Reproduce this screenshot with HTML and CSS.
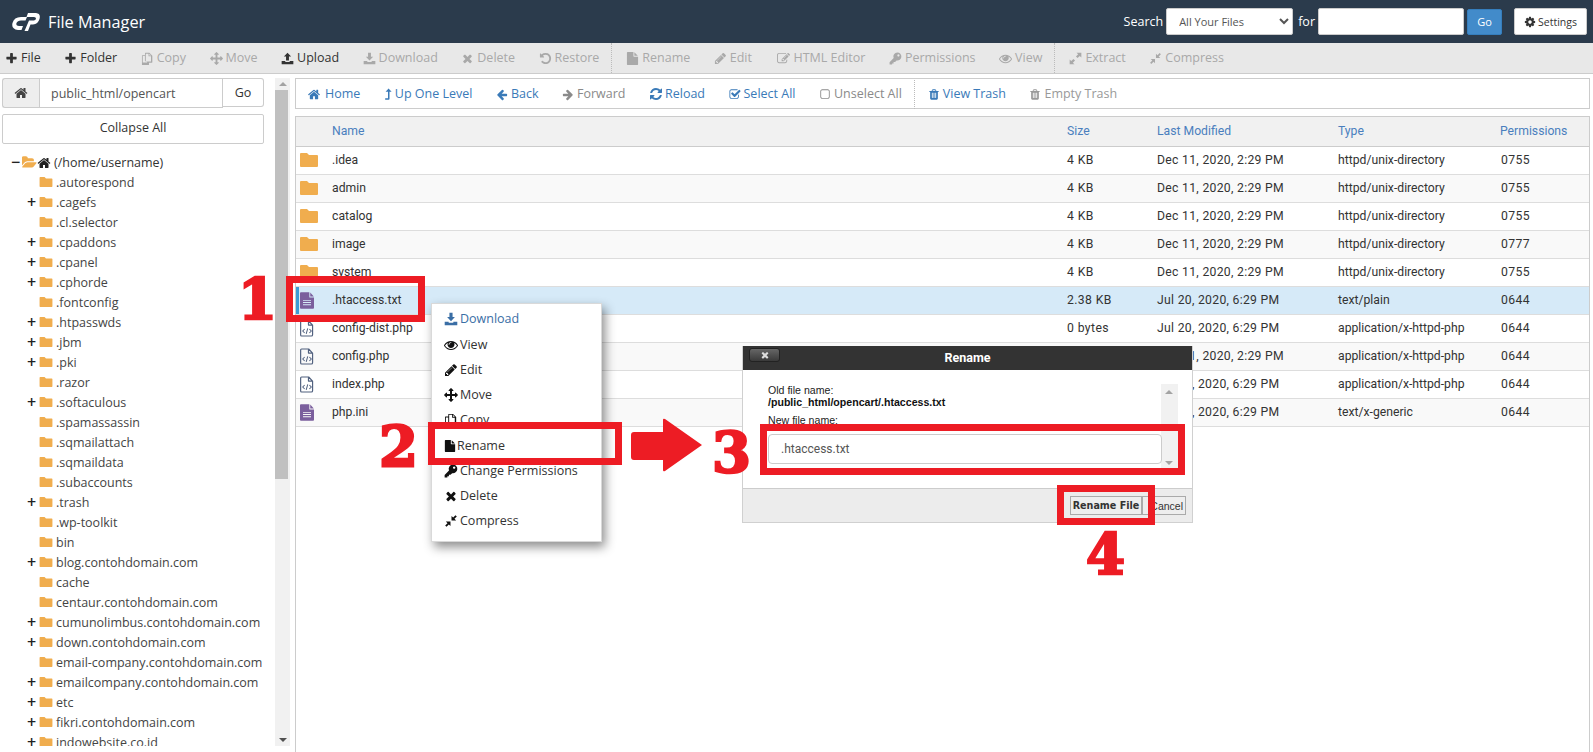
FILE: index.html
```html
<!DOCTYPE html>
<html lang="en">
<head>
<meta charset="utf-8">
<title>File Manager</title>
<link rel="stylesheet" href="styles.css">
</head>
<body>
<svg class="defs" viewBox="0 0 1792 1792" aria-hidden="true">
<symbol id="plus" viewBox="0 0 1792 1792"><path d="M1600 736v192q0 40-28 68t-68 28h-416v416q0 40-28 68t-68 28h-192q-40 0-68-28t-28-68v-416h-416q-40 0-68-28t-28-68v-192q0-40 28-68t68-28h416v-416q0-40 28-68t68-28h192q40 0 68 28t28 68v416h416q40 0 68 28t28 68z"/></symbol>
<symbol id="home" viewBox="0 0 1792 1792"><path d="M1472 992v480q0 26-19 45t-45 19h-384v-384h-256v384h-384q-26 0-45-19t-19-45v-480q0-1 .5-3t.5-3l575-474 575 474q1 2 1 6zm223-69l-62 74q-8 9-21 11h-3q-13 0-21-7l-692-577-692 577q-12 8-24 7-13-2-21-11l-62-74q-8-10-7-23.5t11-21.5l719-599q32-26 76-26t76 26l244 204v-195q0-14 9-23t23-9h192q14 0 23 9t9 23v408l219 182q10 8 11 21.5t-7 23.5z"/></symbol>
<symbol id="folder" viewBox="0 0 18 14"><path d="M1 0H7L9 2H17Q18 2 18 3V13Q18 14 17 14H1Q0 14 0 13V1Q0 0 1 0z"/></symbol>
<symbol id="folder-open" viewBox="0 100 1850 1500"><path d="M1815 952q0 31-31 66l-336 396q-43 51-120.500 86.500t-143.500 35.500h-1088q-34 0-60.500-13t-26.500-43q0-31 31-66l336-396q43-51 120.500-86.500t143.500-35.500h1088q34 0 60.500 13t26.500 43zm-343-344v160h-832q-94 0-197 47.500t-164 119.500l-337 396-5 6q0-4-.5-12.500t-.5-12.500v-960q0-92 66-158t158-66h320q92 0 158 66t66 158v32h544q92 0 158 66t66 158z"/></symbol>
<symbol id="times" viewBox="0 0 1792 1792"><path d="M1490 1322q0 40-28 68l-136 136q-28 28-68 28t-68-28l-294-294-294 294q-28 28-68 28t-68-28l-136-136q-28-28-28-68t28-68l294-294-294-294q-28-28-28-68t28-68l136-136q28-28 68-28t68 28l294 294 294-294q28-28 68-28t68 28l136 136q28 28 28 68t-28 68l-294 294 294 294q28 28 28 68z"/></symbol>
<symbol id="file" viewBox="0 0 1792 1792"><path d="M1152 512v-472q22 14 36 28l408 408q14 14 28 36h-472zm-128 32q0 40 28 68t68 28h544v1056q0 40-28 68t-68 28h-1344q-40 0-68-28t-28-68v-1600q0-40 28-68t68-28h800v544z"/></symbol>
<symbol id="arrows" viewBox="0 0 1792 1792"><path d="M1792 896q0 26-19 45l-256 256q-19 19-45 19t-45-19-19-45v-128h-384v384h128q26 0 45 19t19 45-19 45l-256 256q-19 19-45 19t-45-19l-256-256q-19-19-19-45t19-45 45-19h128v-384h-384v128q0 26-19 45t-45 19-45-19l-256-256q-19-19-19-45t19-45l256-256q19-19 45-19t45 19 19 45v128h384v-384h-128q-26 0-45-19t-19-45 19-45l256-256q19-19 45-19t45 19l256 256q19 19 19 45t-19 45-45 19h-128v384h384v-128q0-26 19-45t45-19 45 19l256 256q19 19 19 45z"/></symbol>
<symbol id="arrow-left" viewBox="0 0 1792 1792"><path d="M1664 896v128q0 53-32.500 90.500t-84.500 37.500h-704l293 294q38 36 38 90t-38 90l-75 76q-37 37-90 37-52 0-91-37l-651-652q-37-37-37-90 0-52 37-91l651-650q38-38 91-38 52 0 90 38l75 74q38 38 38 91t-38 91l-293 293h704q52 0 84.500 37.500t32.500 90.500z"/></symbol>
<symbol id="arrow-right" viewBox="0 0 1792 1792"><path d="M1600 960q0 54-37 91l-651 651q-39 37-91 37-51 0-90-37l-75-75q-38-38-38-91t38-91l293-293h-704q-52 0-84.500-37.500t-32.500-90.500v-128q0-53 32.500-90.500t84.500-37.500h704l-293-294q-38-36-38-90t38-90l75-75q38-38 90-38 53 0 91 38l651 651q37 35 37 90z"/></symbol>
<symbol id="pencil" viewBox="0 0 1792 1792"><path d="M491 1536l91-91-235-235-91 91v107h128v128h107zm523-928q0-22-22-22-10 0-17 7l-542 542q-7 7-7 17 0 22 22 22 10 0 17-7l542-542q7-7 7-17zm-54-192l416 416-832 832h-416v-416zm683 96q0 53-37 90l-166 166-416-416 166-165q36-38 90-38 53 0 91 38l235 234q37 39 37 91z"/></symbol>
<symbol id="key" viewBox="0 0 1792 1792"><path fill-rule="evenodd" d="M1150 80a550 550 0 1 1-100 1090L830 1390H630v190H430v150H80v-330L640 840A550 550 0 0 1 1150 80zM1300 310a150 150 0 1 0 .1 0z"/></symbol>
<symbol id="eye" viewBox="0 0 1792 1792"><path d="M1664 960q-152-236-381-353 61 104 61 225 0 185-131.500 316.500t-316.500 131.500-316.500-131.500-131.500-316.500q0-121 61-225-229 117-381 353 133 205 333.500 326.500t434.500 121.500 434.500-121.500 333.500-326.500zm-720-384q0-20-14-34t-34-14q-125 0-214.500 89.500t-89.500 214.500q0 20 14 34t34 14 34-14 14-34q0-86 61-147t147-61q20 0 34-14t14-34zm848 384q0 34-20 69-140 230-376.500 368.500t-499.500 138.500-499.500-139-376.500-368q-20-35-20-69t20-69q140-229 376.500-368t499.500-139 499.500 139 376.500 368q20 35 20 69z"/></symbol>
<symbol id="trash" viewBox="0 0 1792 1792"><path d="M704 1376v-704q0-14-9-23t-23-9h-64q-14 0-23 9t-9 23v704q0 14 9 23t23 9h64q14 0 23-9t9-23zm256 0v-704q0-14-9-23t-23-9h-64q-14 0-23 9t-9 23v704q0 14 9 23t23 9h64q14 0 23-9t9-23zm256 0v-704q0-14-9-23t-23-9h-64q-14 0-23 9t-9 23v704q0 14 9 23t23 9h64q14 0 23-9t9-23zm-544-992h448l-48-117q-7-9-17-11h-317q-10 2-17 11zm928 32v64q0 14-9 23t-23 9h-96v948q0 83-47 143.500t-113 60.500h-832q-66 0-113-58.500t-47-141.500v-952h-96q-14 0-23-9t-9-23v-64q0-14 9-23t23-9h309l70-167q15-37 54-63t79-26h320q40 0 79 26t54 63l70 167h309q14 0 23 9t9 23z"/></symbol>
<symbol id="refresh" viewBox="0 0 1792 1792"><path d="M1639 1056q0 5-1 7-64 268-268 434.500t-478 166.500q-146 0-282.500-55t-243.500-157l-129 129q-19 19-45 19t-45-19-19-45v-448q0-26 19-45t45-19h448q26 0 45 19t19 45-19 45l-137 137q71 66 161 102t187 36q134 0 250-65t186-179q11-17 53-117 8-23 30-23h192q13 0 22.500 9.500t9.500 22.500zm25-800v448q0 26-19 45t-45 19h-448q-26 0-45-19t-19-45 19-45l138-138q-148-137-349-137-134 0-250 65t-186 179q-11 17-53 117-8 23-30 23h-199q-13 0-22.500-9.500t-9.500-22.500v-7q65-268 270-434.500t480-166.500q146 0 284 55.500t245 156.500l130-129q19-19 45-19t45 19 19 45z"/></symbol>
<symbol id="gear" viewBox="0 0 1792 1792"><path d="M1152 896q0-106-75-181t-181-75-181 75-75 181 75 181 181 75 181-75 75-181zm512-109v222q0 12-8 23t-20 13l-185 28q-19 54-39 91 35 50 107 138 10 12 10 25t-9 23q-27 37-99 108t-94 71q-12 0-26-9l-138-108q-44 23-91 38-16 136-29 186-7 28-36 28h-222q-14 0-24.500-8.500t-11.500-21.500l-28-184q-49-16-90-37l-141 107q-10 9-25 9-14 0-25-11-126-114-165-168-7-10-7-23 0-12 8-23 15-21 51-66.500t54-70.500q-27-50-41-99l-183-27q-13-2-21-12.500t-8-23.500v-222q0-12 8-23t19-13l186-28q14-46 39-92-40-57-107-138-10-12-10-24 0-10 9-23 26-36 98.500-107.500t94.500-71.500q13 0 26 10l138 107q44-23 91-38 16-136 29-186 7-28 36-28h222q14 0 24.500 8.500t11.500 21.500l28 184q49 16 90 37l142-107q9-9 24-9 13 0 25 10 129 119 165 170 7 8 7 22 0 12-8 23-15 21-51 66.500t-54 70.500q26 50 41 98l183 28q13 2 21 12.500t8 23.500z"/></symbol>
<symbol id="check-sq" viewBox="0 0 1792 1792"><path d="M1472 930v318q0 119-84.500 203.500t-203.500 84.500h-832q-119 0-203.500-84.500t-84.500-203.500v-832q0-119 84.500-203.500t203.500-84.500h832q63 0 117 25 15 7 18 23 3 17-9 29l-49 49q-10 10-23 10-3 0-9-2-23-6-45-6h-832q-66 0-113 47t-47 113v832q0 66 47 113t113 47h832q66 0 113-47t47-113v-254q0-13 9-22l64-64q10-10 23-10 6 0 12 3 20 8 20 29zm231-489l-814 814q-24 24-57 24t-57-24l-430-430q-24-24-24-57t24-57l110-110q24-24 57-24t57 24l263 263 647-647q24-24 57-24t57 24l110 110q24 24 24 57t-24 57z"/></symbol>
<symbol id="square" viewBox="0 0 1792 1792"><path d="M1312 256h-832q-66 0-113 47t-47 113v832q0 66 47 113t113 47h832q66 0 113-47t47-113v-832q0-66-47-113t-113-47zm288 160v832q0 119-84.500 203.500t-203.500 84.500h-832q-119 0-203.500-84.500t-84.500-203.500v-832q0-119 84.500-203.500t203.500-84.500h832q119 0 203.500 84.500t84.500 203.500z"/></symbol>
<symbol id="copy" viewBox="0 0 1792 1792"><path fill-rule="evenodd" d="M600 120h560l400 400v900q0 50-50 50h-410v290q0 40-50 40H180q-50 0-50-50V500q0-50 50-50h370V170q0-50 50-50zm60 110v760h0v320h720V600h-340V230zm-120 330H240v900h600v-190H590q-50 0-50-50zM1150 250v240h240z"/></symbol>
<symbol id="upload" viewBox="0 0 1792 1792"><path d="M896 90l500 520h-300v560H696V610H396zM90 1240h500v60q0 90 90 90h432q90 0 90-90v-60h500v420q0 40-40 40H130q-40 0-40-40z"/></symbol>
<symbol id="download" viewBox="0 0 1792 1792"><path d="M696 90h400v560h300l-500 520-500-520h300zM90 1240h500v60q0 90 90 90h432q90 0 90-90v-60h500v420q0 40-40 40H130q-40 0-40-40z"/></symbol>
<symbol id="undo" viewBox="0 0 1792 1792"><path d="M1664 896q0 156-61 298t-164 245-245 164-298 61q-172 0-327-72.500t-264-204.500q-7-10-6.500-22.500t8.500-20.500l137-138q10-9 25-9 16 2 23 12 73 95 179 147t225 52q104 0 198.500-40.500t163.500-109.500 109.500-163.500 40.500-198.500-40.500-198.500-109.500-163.500-163.500-109.500-198.500-40.500q-98 0-188 35.500t-160 101.500l137 138q31 30 14 69-17 40-59 40h-448q-26 0-45-19t-19-45v-448q0-42 40-59 39-17 69 14l130 129q107-101 244.500-156.500t284.500-55.500q156 0 298 61t245 164 164 245 61 298z"/></symbol>
<symbol id="edit" viewBox="0 0 1792 1792"><path d="M888 1184l116-116-152-152-116 116v56h96v96h56zm440-720q-16-16-33 1l-350 350q-17 17-1 33t33-1l350-350q17-17 1-33zm80 594v190q0 119-84.500 203.500t-203.500 84.500h-832q-119 0-203.500-84.500t-84.500-203.500v-832q0-119 84.500-203.500t203.500-84.500h832q63 0 117 25 15 7 18 23 3 17-9 29l-49 49q-14 14-32 8-23-6-45-6h-832q-66 0-113 47t-47 113v832q0 66 47 113t113 47h832q66 0 113-47t47-113v-126q0-13 9-22l64-64q15-15 35-7t20 29zm-96-738l288 288-672 672h-288v-288zm444 132l-92 92-288-288 92-92q27-27 68-27t68 27l152 152q27 27 27 68t-27 68z"/></symbol>
<symbol id="expand" viewBox="0 0 1792 1792"><path d="M1040 100h660v660l-220-220-300 300-220-220 300-300zM752 1692H92v-660l220 220 300-300 220 220-300 300z"/></symbol>
<symbol id="compress" viewBox="0 0 1792 1792"><path d="M960 240v590h590l-210-210 300-300-170-170-300 300zM830 960v590l-210-210-300 300-170-170 300-300-210-210z"/></symbol>
<symbol id="levelup" viewBox="0 0 1100 1792"><path d="M560 60l420 470H690v960q0 120-120 120H90v-190h390V530H150z"/></symbol>
<symbol id="file-text" viewBox="0 0 1536 1792"><path fill-rule="evenodd" d="M1024 0v520q0 60 60 60h452v1112q0 100-100 100H100q-100 0-100-100V100Q0 0 100 0zM1124 20l392 440h-392zM330 830v100h876V830zm0 240v100h876v-100zm0 240v100h876v-100z"/></symbol>
<symbol id="file-code" viewBox="0 0 1536 1792"><path fill="none" stroke="currentColor" stroke-width="130" stroke-linejoin="round" d="M170 70h780l430 450v1060q0 140-140 140H170q-100 0-100-100V170q0-100 100-100zM930 80v440h440"/><path fill="none" stroke="currentColor" stroke-width="110" d="M510 950l-210 220 210 220M1030 950l210 220-210 220M850 880l-170 600"/></symbol>
<symbol id="cp" viewBox="0 0 28 19"><path d="M15 5H9Q2 5 .5 11Q-1 17 6 18H9.500L11 14H7Q3.500 14 4.500 11Q5.500 8.500 9 8.500H13.500zM16 1H24Q29 1.500 27.500 7Q26 12 21 12.500H18.500L16 19H12.500L17 8.500H22Q24 8 24 6.500Q24 5 22 5H14.500z"/></symbol>
</svg>

<div class="app">
  <header class="topbar">
    <div class="brand"><svg class="logo"><use href="#cp"/></svg><span class="brand-name">File Manager</span></div>
    <form class="search">
      <label class="search-label">Search</label>
      <select class="search-select"><option>All Your Files</option></select>
      <label class="search-label">for</label>
      <input class="search-input" type="text">
      <button class="btn-go" type="button">Go</button>
      <button class="btn-settings" type="button"><svg class="ic ic-s"><use href="#gear"/></svg>Settings</button>
    </form>
  </header>

  <nav class="toolbar">
    <a class="tb"><svg class="ic"><use href="#plus"/></svg>File</a>
    <a class="tb"><svg class="ic"><use href="#plus"/></svg>Folder</a>
    <a class="tb off"><svg class="ic"><use href="#copy"/></svg>Copy</a>
    <a class="tb off"><svg class="ic"><use href="#arrows"/></svg>Move</a>
    <a class="tb"><svg class="ic"><use href="#upload"/></svg>Upload</a>
    <a class="tb off"><svg class="ic"><use href="#download"/></svg>Download</a>
    <a class="tb off"><svg class="ic"><use href="#times"/></svg>Delete</a>
    <a class="tb off"><svg class="ic"><use href="#undo"/></svg>Restore</a>
    <span class="tb-sep"></span>
    <a class="tb off"><svg class="ic"><use href="#file"/></svg>Rename</a>
    <a class="tb off"><svg class="ic"><use href="#pencil"/></svg>Edit</a>
    <a class="tb off"><svg class="ic ic-wide"><use href="#edit"/></svg>HTML Editor</a>
    <a class="tb off"><svg class="ic"><use href="#key"/></svg>Permissions</a>
    <a class="tb off"><svg class="ic"><use href="#eye"/></svg>View</a>
    <span class="tb-sep"></span>
    <a class="tb off"><svg class="ic"><use href="#expand"/></svg>Extract</a>
    <a class="tb off"><svg class="ic"><use href="#compress"/></svg>Compress</a>
  </nav>

  <div class="workspace">
    <aside class="sidebar">
      <div class="pathbar">
        <span class="path-home"><svg class="ic"><use href="#home"/></svg></span>
        <input class="path-input" type="text" value="public_html/opencart">
        <button class="path-go" type="button">Go</button>
      </div>
      <button class="collapse" type="button">Collapse All</button>
      <ul class="tree">
        <li class="root"><span class="tog">−</span><svg class="fo fo-open"><use href="#folder-open"/></svg><svg class="ic ic-home"><use href="#home"/></svg><span>(/home/username)</span></li>
        <li><span class="tog"></span><svg class="fo"><use href="#folder"/></svg><span>.autorespond</span></li>
        <li><span class="tog">+</span><svg class="fo"><use href="#folder"/></svg><span>.cagefs</span></li>
        <li><span class="tog"></span><svg class="fo"><use href="#folder"/></svg><span>.cl.selector</span></li>
        <li><span class="tog">+</span><svg class="fo"><use href="#folder"/></svg><span>.cpaddons</span></li>
        <li><span class="tog">+</span><svg class="fo"><use href="#folder"/></svg><span>.cpanel</span></li>
        <li><span class="tog">+</span><svg class="fo"><use href="#folder"/></svg><span>.cphorde</span></li>
        <li><span class="tog"></span><svg class="fo"><use href="#folder"/></svg><span>.fontconfig</span></li>
        <li><span class="tog">+</span><svg class="fo"><use href="#folder"/></svg><span>.htpasswds</span></li>
        <li><span class="tog">+</span><svg class="fo"><use href="#folder"/></svg><span>.jbm</span></li>
        <li><span class="tog">+</span><svg class="fo"><use href="#folder"/></svg><span>.pki</span></li>
        <li><span class="tog"></span><svg class="fo"><use href="#folder"/></svg><span>.razor</span></li>
        <li><span class="tog">+</span><svg class="fo"><use href="#folder"/></svg><span>.softaculous</span></li>
        <li><span class="tog"></span><svg class="fo"><use href="#folder"/></svg><span>.spamassassin</span></li>
        <li><span class="tog"></span><svg class="fo"><use href="#folder"/></svg><span>.sqmailattach</span></li>
        <li><span class="tog"></span><svg class="fo"><use href="#folder"/></svg><span>.sqmaildata</span></li>
        <li><span class="tog"></span><svg class="fo"><use href="#folder"/></svg><span>.subaccounts</span></li>
        <li><span class="tog">+</span><svg class="fo"><use href="#folder"/></svg><span>.trash</span></li>
        <li><span class="tog"></span><svg class="fo"><use href="#folder"/></svg><span>.wp-toolkit</span></li>
        <li><span class="tog"></span><svg class="fo"><use href="#folder"/></svg><span>bin</span></li>
        <li><span class="tog">+</span><svg class="fo"><use href="#folder"/></svg><span>blog.contohdomain.com</span></li>
        <li><span class="tog"></span><svg class="fo"><use href="#folder"/></svg><span>cache</span></li>
        <li><span class="tog"></span><svg class="fo"><use href="#folder"/></svg><span>centaur.contohdomain.com</span></li>
        <li><span class="tog">+</span><svg class="fo"><use href="#folder"/></svg><span>cumunolimbus.contohdomain.com</span></li>
        <li><span class="tog">+</span><svg class="fo"><use href="#folder"/></svg><span>down.contohdomain.com</span></li>
        <li><span class="tog"></span><svg class="fo"><use href="#folder"/></svg><span>email-company.contohdomain.com</span></li>
        <li><span class="tog">+</span><svg class="fo"><use href="#folder"/></svg><span>emailcompany.contohdomain.com</span></li>
        <li><span class="tog">+</span><svg class="fo"><use href="#folder"/></svg><span>etc</span></li>
        <li><span class="tog">+</span><svg class="fo"><use href="#folder"/></svg><span>fikri.contohdomain.com</span></li>
        <li><span class="tog">+</span><svg class="fo"><use href="#folder"/></svg><span>indowebsite.co.id</span></li>
      </ul>
    </aside>

    <div class="scrollbar">
      <span class="sb-up"></span>
      <span class="sb-thumb"></span>
      <span class="sb-down"></span>
    </div>

    <main class="main">
      <div class="actions">
        <a class="ac"><svg class="ic ic-h"><use href="#home"/></svg>Home</a>
        <a class="ac"><svg class="ic ic-n"><use href="#levelup"/></svg>Up One Level</a>
        <a class="ac"><svg class="ic"><use href="#arrow-left"/></svg>Back</a>
        <a class="ac off"><svg class="ic"><use href="#arrow-right"/></svg>Forward</a>
        <a class="ac"><svg class="ic ic-w"><use href="#refresh"/></svg>Reload</a>
        <a class="ac"><svg class="ic"><use href="#check-sq"/></svg>Select All</a>
        <a class="ac off"><svg class="ic"><use href="#square"/></svg>Unselect All</a>
        <span class="ac-sep"></span>
        <a class="ac"><svg class="ic"><use href="#trash"/></svg>View Trash</a>
        <a class="ac off trash-off"><svg class="ic"><use href="#trash"/></svg>Empty Trash</a>
      </div>

      <div class="listing">
        <table class="files">
          <colgroup><col class="c-ico"><col class="c-name"><col class="c-size"><col class="c-mod"><col class="c-type"><col class="c-perm"></colgroup>
          <thead><tr><th></th><th>Name</th><th>Size</th><th>Last Modified</th><th>Type</th><th>Permissions</th></tr></thead>
          <tbody>
            <tr><td class="i"><svg class="fo-big"><use href="#folder"/></svg></td><td>.idea</td><td class="s">4 KB</td><td class="d">Dec 11, 2020, 2:29 PM</td><td>httpd/unix-directory</td><td class="p">0755</td></tr>
            <tr><td class="i"><svg class="fo-big"><use href="#folder"/></svg></td><td>admin</td><td class="s">4 KB</td><td class="d">Dec 11, 2020, 2:29 PM</td><td>httpd/unix-directory</td><td class="p">0755</td></tr>
            <tr><td class="i"><svg class="fo-big"><use href="#folder"/></svg></td><td>catalog</td><td class="s">4 KB</td><td class="d">Dec 11, 2020, 2:29 PM</td><td>httpd/unix-directory</td><td class="p">0755</td></tr>
            <tr><td class="i"><svg class="fo-big"><use href="#folder"/></svg></td><td>image</td><td class="s">4 KB</td><td class="d">Dec 11, 2020, 2:29 PM</td><td>httpd/unix-directory</td><td class="p">0777</td></tr>
            <tr><td class="i"><svg class="fo-big"><use href="#folder"/></svg></td><td>system</td><td class="s">4 KB</td><td class="d">Dec 11, 2020, 2:29 PM</td><td>httpd/unix-directory</td><td class="p">0755</td></tr>
            <tr class="sel"><td class="i"><svg class="doc txt"><use href="#file-text"/></svg></td><td>.htaccess.txt</td><td class="s">2.38 KB</td><td class="d">Jul 20, 2020, 6:29 PM</td><td>text/plain</td><td class="p">0644</td></tr>
            <tr><td class="i"><svg class="doc code"><use href="#file-code"/></svg></td><td>config-dist.php</td><td class="s">0 bytes</td><td class="d">Jul 20, 2020, 6:29 PM</td><td>application/x-httpd-php</td><td class="p">0644</td></tr>
            <tr><td class="i"><svg class="doc code"><use href="#file-code"/></svg></td><td>config.php</td><td class="s">4 KB</td><td class="d">Dec 11, 2020, 2:29 PM</td><td>application/x-httpd-php</td><td class="p">0644</td></tr>
            <tr><td class="i"><svg class="doc code"><use href="#file-code"/></svg></td><td>index.php</td><td class="s">4 KB</td><td class="d">Jul 20, 2020, 6:29 PM</td><td>application/x-httpd-php</td><td class="p">0644</td></tr>
            <tr><td class="i"><svg class="doc txt"><use href="#file-text"/></svg></td><td>php.ini</td><td class="s">1 KB</td><td class="d">Jul 20, 2020, 6:29 PM</td><td>text/x-generic</td><td class="p">0644</td></tr>
          </tbody>
        </table>
      </div>
    </main>
  </div>

  <ul class="ctx">
    <li class="dl"><svg class="ic"><use href="#download"/></svg>Download</li>
    <li><svg class="ic"><use href="#eye"/></svg>View</li>
    <li><svg class="ic"><use href="#pencil"/></svg>Edit</li>
    <li><svg class="ic"><use href="#arrows"/></svg>Move</li>
    <li><svg class="ic"><use href="#copy"/></svg>Copy</li>
    <li class="tight"><svg class="ic ic-f"><use href="#file"/></svg>Rename</li>
    <li><svg class="ic"><use href="#key"/></svg>Change Permissions</li>
    <li><svg class="ic"><use href="#times"/></svg>Delete</li>
    <li><svg class="ic"><use href="#compress"/></svg>Compress</li>
  </ul>

  <section class="modal">
    <div class="modal-head"><button class="modal-x" type="button"><svg class="ic"><use href="#times"/></svg></button><h2 class="modal-title">Rename</h2></div>
    <div class="modal-body">
      <div class="modal-scroll"><span class="ms-up"></span><span class="ms-down"></span></div>
      <p class="old">Old file name:<br><b>/public_html/opencart/.htaccess.txt</b></p>
      <p class="new">New file name:</p>
      <input class="new-input" type="text" value=".htaccess.txt">
    </div>
    <div class="modal-foot">
      <button class="mbtn mbtn-main" type="button">Rename File</button><button class="mbtn mbtn-cancel" type="button">Cancel</button>
    </div>
  </section>

  <span class="mark m1"></span>
  <span class="mark m2"></span>
  <span class="mark m3"></span>
  <span class="mark m4"></span>
  <span class="num n1">1</span>
  <span class="num n2">2</span>
  <span class="num n3">3</span>
  <span class="num n4">4</span>
  <svg class="bigarrow" viewBox="0 0 72 54"><path d="M3 14H32V2q0-2 2-1l37 26L34 53q-2 1-2-1V42H3q-3 0-3-3V17q0-3 3-3z"/></svg>
</div>
</body>
</html>
```

FILE: styles.css
```css
* { box-sizing: border-box; }
html, body { margin: 0; height: 100%; overflow: hidden; }
body { font: 12.500px/18px "Open Sans", sans-serif; color: #333; background: #fff; }
.defs { position: absolute; width: 0; height: 0; }
svg { fill: currentColor; flex: none; }
ul { list-style: none; margin: 0; padding: 0; }
.app { position: relative; width: 1593px; height: 752px; display: flex; flex-direction: column; overflow: hidden; }
.ic { width: 13px; height: 13px; margin-right: 3px; }

/* header */
.topbar { height: 43px; flex: none; background: #2b3b4c; display: flex; justify-content: space-between; align-items: center; padding: 0 6px 0 12px; color: #fff; }
.brand { display: flex; align-items: center; }
.logo { width: 28px; height: 19px; color: #fff; margin-right: 8px; }
.brand-name { font-size: 16.250px; line-height: 24px; }
.search { display: flex; align-items: center; }
.search-label { font-size: 12.500px; margin-right: 3px; }
.search-select { width: 127px; height: 27px; margin-right: 5px; border: 1px solid #ccc; border-radius: 2px; background: #fff; color: #555; font: 11px "Open Sans", sans-serif; padding-left: 8px; }
.search-input { width: 146px; height: 27px; border: 1px solid #ccc; border-radius: 2px; background: #fff; margin-right: 3px; }
.btn-go { width: 35px; height: 26px; background: #428bca; color: #fff; border: 1px solid #357ebd; border-radius: 2px; font: 11px "Open Sans", sans-serif; padding: 0; margin-right: 12px; }
.btn-settings { width: 73px; height: 27px; background: #fff; color: #333; border: 1px solid #ccc; border-radius: 2px; font: 10.500px "Open Sans", sans-serif; padding: 0; display: flex; align-items: center; justify-content: center; }
.ic-s { width: 12px; height: 12px; margin-right: 2px; }

/* main toolbar */
.toolbar { height: 31px; flex: none; background: #e8e8e8; border-bottom: 1px solid #ccc; display: flex; align-items: center; gap: 23.500px; padding-left: 5px; white-space: nowrap; }
.tb { display: flex; align-items: center; color: #333; }
.tb.off { color: #a9a9a9; }
.tb .ic-wide { width: 15px; }
.tb-sep { width: 0; height: 30px; margin: 0 -9px 0 -12px; border-left: 1px dotted #bbb; }

/* workspace */
.workspace { flex: 1; min-height: 0; display: flex; }
.sidebar { width: 275px; flex: none; padding: 4px 11px 0 2px; display: flex; flex-direction: column; min-height: 0; }
.pathbar { display: flex; height: 30px; flex: none; }
.path-home { width: 37px; background: #eee; border: 1px solid #ccc; border-right: 0; border-radius: 3px 0 0 3px; display: flex; align-items: center; justify-content: center; color: #444; }
.path-home .ic { margin: 0; width: 14px; height: 14px; }
.path-input { width: 184px; border: 1px solid #ccc; padding: 0 11px; font: 12.500px "Open Sans", sans-serif; color: #555; }
.path-go { width: 41px; border: 1px solid #ccc; border-left: 0; background: #fff; font: 12.500px "Open Sans", sans-serif; color: #333; padding: 0; border-radius: 0 3px 3px 0; height: 29px; }
.collapse { height: 30px; flex: none; margin-top: 6px; background: #fff; border: 1px solid #ccc; border-radius: 2px; font: 12.500px/26px "Open Sans", sans-serif; color: #333; padding: 0 0 2px; }
.tree { margin-top: 9px; flex: 1; min-height: 0; overflow: hidden; margin-bottom: 6px; white-space: nowrap; }
.tree li { height: 20px; display: flex; align-items: center; padding-left: 24px; color: #444; }
.tree .root { padding-left: 8px; color: #333; }
.tog { width: 11px; font-size: 16px; font-weight: 600; line-height: 16px; flex: none; color: #222; text-align: center; margin-top: -3px; }
.fo { width: 14px; height: 10px; color: #f0ad4e; margin: -2px 3px 0 2px; }
.fo-open { width: 15px; height: 12px; margin: -3px 0 0 1px; }
.ic-home { margin-right: 3px; width: 14px; height: 14px; color: #222; margin-top: -1px; }

/* scrollbar */
.scrollbar { width: 15px; flex: none; margin-top: 4px; margin-bottom: 6px; background: #f1f1f1; display: flex; flex-direction: column; align-items: center; }
.sb-up { width: 0; height: 0; border: 4px solid transparent; border-top: 0; border-bottom-color: #a3a3a3; margin: 4px 0 4px; }
.sb-thumb { width: 13px; height: 389px; background: #c0c0c0; margin-right: 2px; }
.sb-down { width: 0; height: 0; border: 4px solid transparent; border-bottom: 0; border-top-color: #505050; margin-top: auto; margin-bottom: 4px; }

/* right side */
.main { flex: 1; min-width: 0; margin-left: 5px; margin-right: 3px; padding-top: 4px; display: flex; flex-direction: column; }
.actions { height: 31px; flex: none; border: 1px solid #ccc; background: #fff; display: flex; align-items: center; gap: 23.500px; padding: 1px 0 0 11px; white-space: nowrap; }
.ac { display: flex; align-items: center; color: #3a7ab8; }
.ac .ic { width: 12px; }
.ac.off { color: #8a8a8a; }
.ac.trash-off { color: #999; }
.ac .ic-h { width: 14px; margin-right: 4px; }
.ac .ic-n { width: 9px; margin-right: 2px; }
.ac .ic-w { width: 14px; margin-right: 2px; height: 14px; }
.ac-sep { width: 0; height: 29px; margin: 0 -11px; border-left: 1px dotted #bbb; }
.listing { flex: 1; margin-top: 7px; border: 1px solid #ccc; border-bottom: 0; }
.files { width: 100%; table-layout: fixed; border-collapse: collapse; font: 12.200px/16px Roboto, sans-serif; color: #333; }
.c-ico { width: 36px; }
.c-name { width: 735px; }
.c-size { width: 90px; }
.c-mod { width: 181px; }
.c-type { width: 162px; }
.files th { height: 29px; background: #f1f1f1; border-bottom: 1px solid #ccc; text-align: left; font-weight: 400; color: #4a7fbe; padding: 0; }
.files td { height: 28px; border-bottom: 1px solid #ddd; padding: 0; white-space: nowrap; }
.files tbody tr:nth-child(even) { background: #f9f9f9; }
.files tr.sel { background: #d6eaf8 !important; }
.files tr.sel .i { box-shadow: inset 3px 0 0 #3b9bd6; }
.files .s { letter-spacing: .4px; }
.files .d { letter-spacing: .3px; }
.files .p { padding-left: 1px; letter-spacing: .4px; }
.files .i { padding-left: 4px; }
.fo-big { display: block; width: 18px; height: 14px; color: #f0ad4e; }
.doc { display: block; width: 14px; height: 19px; }
.txt { color: #7b5f9d; }
.code { color: #51617f; }

/* context menu */
.ctx { position: absolute; left: 431px; top: 303px; width: 171px; height: 239px; background: #fff; border: 1px solid #d9d9d9; padding-top: 2px; box-shadow: 3px 5px 10px rgba(0,0,0,.45); }
.ctx li { height: 25.250px; display: flex; align-items: center; padding-left: 12px; color: #333; }
.ctx .dl { color: #3a6ea5; height: 26px; }
.ctx .tight .ic { margin-right: 1px; }
.ctx .ic { color: #111; width: 14px; height: 14px; margin-right: 2px; }
.ctx .dl .ic { color: #3a6ea5; }
.ctx .ic-f { width: 12px; }

/* rename dialog */
.modal { position: absolute; left: 742px; top: 346px; width: 451px; height: 177px; background: #fff; border: 1px solid #d0d0d0; border-top: 0; display: flex; flex-direction: column; font-family: "Liberation Sans", sans-serif; }
.modal-head { height: 24px; flex: none; background: #333; display: flex; align-items: center; justify-content: center; position: relative; }
.modal-title { margin: 0; color: #fff; font: 700 12.500px/16px Roboto, sans-serif; }
.modal-x { position: absolute; left: 6px; top: 2px; width: 31px; height: 14px; background: linear-gradient(#666, #3a3a3a); border: 1px solid #222; border-radius: 3px; color: #ddd; padding: 0; display: flex; align-items: center; justify-content: center; }
.modal-x .ic { margin: 0; width: 10px; height: 10px; }
.modal-body { flex: 1; position: relative; padding: 14px 0 0 25px; font-size: 10.600px; line-height: 12px; color: #222; }
.modal-scroll { position: absolute; right: 14px; top: 14px; width: 17px; height: 84px; background: #f1f1f1; }
.ms-up, .ms-down { position: absolute; left: 4px; width: 0; height: 0; border: 4px solid transparent; }
.ms-up { top: 6px; border-top: 0; border-bottom-color: #a3a3a3; }
.ms-down { bottom: 3px; border-bottom: 0; border-top-color: #a3a3a3; }
.old { margin: 0 0 6px; }
.old b { color: #111; }
.new { margin: 0 0 8px; }
.new-input { position: relative; width: 394px; height: 30px; border: 1px solid #ccc; border-radius: 4px; padding: 0 12px; font: 12px Roboto, sans-serif; color: #555; }
.modal-foot { height: 34px; flex: none; background: #ececec; border-top: 1px solid #ccc; display: flex; justify-content: flex-end; align-items: center; padding-right: 6px; }
.mbtn { height: 19px; border: 1px solid #aaa; background: #eee; padding: 0; font: 10.500px "Liberation Sans", sans-serif; color: #333; }
.mbtn-main { width: 72px; font-weight: 700; font-family: "DejaVu Sans", sans-serif; font-size: 9.600px; }
.mbtn-cancel { width: 44px; text-align: right; padding-right: 2px; }

/* annotations */
.mark { position: absolute; border: 7px solid #ed1c24; }
.m1 { left: 286px; top: 276px; width: 139px; height: 46px; }
.m2 { left: 428px; top: 422px; width: 194px; height: 43px; }
.m3 { left: 760px; top: 424px; width: 425px; height: 51px; }
.m4 { left: 1057px; top: 485px; width: 98px; height: 40px; }
.num { position: absolute; font: 900 56px/56px "DejaVu Serif", serif; color: #ed1c24; -webkit-text-stroke: 2.500px #ed1c24; }
.n1 { left: 238px; top: 271px; }
.n2 { left: 379px; top: 418px; }
.n3 { left: 712px; top: 424px; }
.n4 { left: 1086px; top: 526px; }
.bigarrow { position: absolute; left: 631px; top: 418px; width: 72px; height: 54px; color: #ed1c24; }
```
